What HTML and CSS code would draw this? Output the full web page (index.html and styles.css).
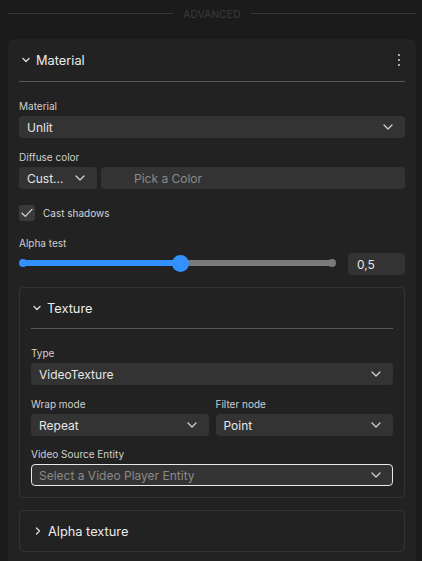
FILE: index.html
```html
<!DOCTYPE html>
<html lang="en">
<head>
<meta charset="utf-8">
<title>Inspector</title>
<link rel="stylesheet" href="styles.css">
</head>
<body>
<div class="section-divider"><span>ADVANCED</span></div>

<div class="card">
  <div class="card-header">
    <svg class="chev" width="8" height="6" viewBox="0 0 8 6"><path d="M1 1.5 L4 4.5 L7 1.5" /></svg>
    <span class="card-title">Material</span>
    <span class="kebab"><i></i><i></i><i></i></span>
  </div>

  <div class="field first">
    <div class="label">Material</div>
    <div class="select"><span>Unlit</span><svg class="caret" width="10" height="6" viewBox="0 0 10 6"><path d="M1 1 L5 5 L9 1" /></svg></div>
  </div>

  <div class="field">
    <div class="label">Diffuse color</div>
    <div class="color-row">
      <div class="select select-small"><span>Cust...</span><svg class="caret" width="10" height="6" viewBox="0 0 10 6"><path d="M1 1 L5 5 L9 1" /></svg></div>
      <div class="input input-color"><span class="placeholder">Pick a Color</span></div>
    </div>
  </div>

  <label class="check-row">
    <span class="checkbox"><svg width="12" height="10" viewBox="0 0 12 10"><path d="M1 5.2 L4.3 8.4 L11 1.4" /></svg></span>
    <span class="check-text">Cast shadows</span>
  </label>

  <div class="field spaced">
    <div class="label">Alpha test</div>
    <div class="slider-row">
      <div class="slider">
        <div class="track"></div>
        <div class="fill" style="width: 51%"></div>
        <div class="dot dot-start"></div>
        <div class="dot dot-end"></div>
        <div class="thumb" style="left: 51%"></div>
      </div>
      <div class="input input-num"><span>0,5</span></div>
    </div>
  </div>

  <div class="subcard">
    <div class="card-header sub-header">
      <svg class="chev" width="8" height="6" viewBox="0 0 8 6"><path d="M1 1.5 L4 4.5 L7 1.5" /></svg>
      <span class="card-title">Texture</span>
    </div>
    <div class="field first">
      <div class="label">Type</div>
      <div class="select"><span>VideoTexture</span><svg class="caret" width="10" height="6" viewBox="0 0 10 6"><path d="M1 1 L5 5 L9 1" /></svg></div>
    </div>
    <div class="pair">
      <div class="field">
        <div class="label">Wrap mode</div>
        <div class="select"><span>Repeat</span><svg class="caret" width="10" height="6" viewBox="0 0 10 6"><path d="M1 1 L5 5 L9 1" /></svg></div>
      </div>
      <div class="field">
        <div class="label">Filter node</div>
        <div class="select"><span>Point</span><svg class="caret" width="10" height="6" viewBox="0 0 10 6"><path d="M1 1 L5 5 L9 1" /></svg></div>
      </div>
    </div>
    <div class="field tight">
      <div class="label">Video Source Entity</div>
      <div class="select select-focus"><span class="placeholder">Select a Video Player Entity</span><svg class="caret" width="10" height="6" viewBox="0 0 10 6"><path d="M1 1 L5 5 L9 1" /></svg></div>
    </div>
  </div>

  <div class="subcard subcard-closed">
    <div class="card-header sub-header closed">
      <svg class="chev chev-right" width="6" height="8" viewBox="0 0 6 8"><path d="M1.5 1 L4.5 4 L1.5 7" /></svg>
      <span class="card-title">Alpha texture</span>
    </div>
  </div>
</div>
</body>
</html>
```

FILE: styles.css
```css
* { box-sizing: border-box; }

body {
  margin: 0;
  background: #1b1b1b;
  font-family: Inter, "Noto Sans", "Liberation Sans", sans-serif;
  color: #e4e4e4;
  overflow: hidden;
}

/* section title with rules on either side */
.section-divider {
  display: flex;
  align-items: center;
  gap: 10px;
  height: 27px;
  padding: 0 6px 0 8px;
  font-size: 10px;
  letter-spacing: 0.3px;
  color: #3b3b3b;
}
.section-divider::before,
.section-divider::after {
  content: "";
  flex: 1;
  height: 1px;
  background: #363636;
}

.card {
  margin: 12px 6px 0 8px;
  background: #222222;
  border-radius: 6px 6px 0 0;
  padding: 0 11px 20px;
  min-height: 540px;
}

.card-header {
  display: flex;
  align-items: center;
  height: 43px;
  border-bottom: 1px solid #585858;
  padding-left: 3px;
}
.chev {
  fill: none;
  stroke: #d8d8d8;
  stroke-width: 1.4;
  stroke-linecap: round;
  stroke-linejoin: round;
  margin-right: 6px;
}
.card-title {
  font-size: 12.8px;
  color: #ececec;
}
.kebab {
  margin-left: auto;
  margin-right: 5px;
  display: flex;
  flex-direction: column;
  gap: 2.6px;
}
.kebab i {
  display: block;
  width: 2.2px;
  height: 2.2px;
  background: #d8d8d8;
  border-radius: 50%;
}

.field { margin-top: 13px; }
.field.first { margin-top: 18px; }
.field.spaced { margin-top: 16px; }
.field.tight { margin-top: 12px; }
.label {
  font-size: 10px;
  line-height: 13px;
  color: #cfcfcf;
  margin-bottom: 3px;
}

.select,
.input {
  height: 22px;
  background: #333333;
  border-radius: 4px;
  display: flex;
  align-items: center;
  font-size: 12px;
  color: #e6e6e6;
}
.select {
  padding: 0 12px 0 8px;
  justify-content: space-between;
}
.caret {
  fill: none;
  stroke: #d0d0d0;
  stroke-width: 1.3;
  stroke-linecap: round;
  stroke-linejoin: round;
}
.placeholder { color: #8a8a8a; }

.color-row {
  display: flex;
  gap: 4px;
}
.select-small {
  width: 78px;
  flex: none;
  padding-right: 12px;
}
.input-color {
  flex: 1;
  padding-left: 33px;
}

.check-row {
  display: flex;
  align-items: center;
  gap: 8px;
  margin-top: 16px;
  height: 16px;
}
.checkbox {
  width: 16px;
  height: 16px;
  border-radius: 3px;
  background: #3a3a3a;
  display: flex;
  align-items: center;
  justify-content: center;
}
.checkbox svg {
  fill: none;
  stroke: #d6d6d6;
  stroke-width: 1.3;
  stroke-linecap: round;
  stroke-linejoin: round;
}
.check-text {
  font-size: 10px;
  color: #d4d4d4;
}

.slider-row {
  display: flex;
  align-items: center;
  gap: 12px;
}
.slider {
  position: relative;
  flex: 1;
  height: 22px;
}
.track,
.fill {
  position: absolute;
  left: 4px;
  top: 7px;
  height: 6px;
}
.track {
  right: 4px;
  background: #7a7a7a;
}
.fill { background: #3390ff; }
.dot {
  position: absolute;
  top: 6px;
  width: 8px;
  height: 8px;
  border-radius: 50%;
}
.dot-start { left: 0; background: #3390ff; }
.dot-end { right: 0; background: #7a7a7a; }
.thumb {
  position: absolute;
  top: 1.5px;
  width: 17px;
  height: 17px;
  margin-left: -9px;
  border-radius: 50%;
  background: #3390ff;
}
.input-num {
  width: 57px;
  flex: none;
  padding-left: 9px;
}

.subcard {
  margin-top: 12px;
  border: 1px solid #333333;
  border-radius: 4px;
  padding: 0 11px 11px;
}
.sub-header {
  height: 41px;
  padding-left: 2px;
}
.subcard-closed { padding-bottom: 0; }
.sub-header.closed {
  border-bottom: none;
  height: 40px;
  padding-left: 4px;
}
.chev-right { margin-right: 7px; }

.pair {
  display: grid;
  grid-template-columns: 1fr 1fr;
  gap: 7px;
}

.select-focus {
  border: 1px solid #e8e8e8;
  padding-left: 7px;
  padding-right: 11px;
}
```
